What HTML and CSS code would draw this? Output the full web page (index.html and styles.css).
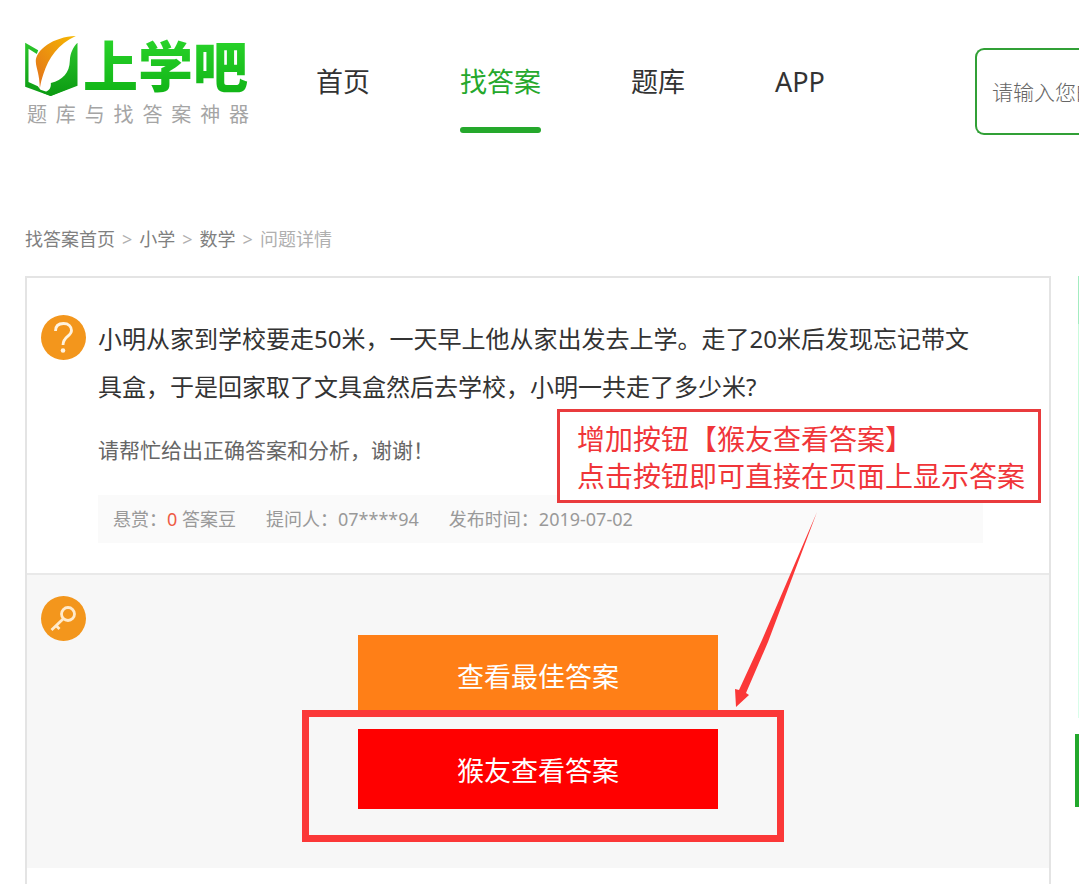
FILE: index.html
```html
<!DOCTYPE html>
<html lang="zh-CN">
<head>
<meta charset="utf-8">
<title>问题详情 - 上学吧找答案</title>
<link rel="stylesheet" href="styles.css">
</head>
<body>
<header class="header">
  <a class="logo" href="#">
    <span class="logo-top">
      <svg class="logo-mark" viewBox="0 0 158 180" aria-hidden="true">
        <defs>
          <linearGradient id="leaf" x1="0" y1="0" x2="0" y2="1"><stop offset="0" stop-color="#2bc52b"/><stop offset="1" stop-color="#0b9a12"/></linearGradient>
          <linearGradient id="quill" x1="1" y1="0" x2="0" y2="1"><stop offset="0" stop-color="#f6b800"/><stop offset="1" stop-color="#e2701c"/></linearGradient>
        </defs>
        <path fill="url(#leaf)" d="M0 20 39 43 35 54 10 38V138L38 151 46 161 76 171 158 146 76 180 0 152Z"/>
        <path fill="url(#leaf)" d="M157 20V149L77 180 54 171C72 165 78 157 77 141 113 132 133 110 134 74 135 49 145 32 157 20Z"/>
        <path fill="url(#quill)" d="M152 0C85 2 30 42 32 78 33 98 43 112 44 157 47 140 49 130 55 113 70 66 99 24 152 0Z"/>
      </svg>
      <span class="logo-name">上学吧</span>
    </span>
    <span class="logo-slogan">题库与找答案神器</span>
  </a>
  <nav class="nav">
    <a href="#">首页</a>
    <a class="active" href="#">找答案</a>
    <a href="#">题库</a>
    <a href="#">APP</a>
  </nav>
  <input class="search" type="text" aria-label="搜索" placeholder="请输入您的问题">
</header>

<nav class="crumbs" aria-label="面包屑">
  <a href="#">找答案首页</a><span>&gt;</span><a href="#">小学</a><span>&gt;</span><a href="#">数学</a><span>&gt;</span><span>问题详情</span>
</nav>

<div class="layout">
  <main class="card">
    <section class="question">
      <svg class="badge" viewBox="0 0 45 45" aria-hidden="true">
        <circle cx="22.5" cy="22.5" r="22.5" fill="#f3961c"/>
        <path d="M14.500 16C14.500 11 17.500 8.500 22.500 8.500S30.500 11.500 30.500 15.500C30.500 21.500 22 21 22 30" fill="none" stroke="#fff3df" stroke-width="2.800"/>
        <circle cx="22" cy="35.500" r="2.300" fill="#fff3df"/>
      </svg>
      <div class="question-body">
        <h1 class="question-title">小明从家到学校要走50米，一天早上他从家出发去上学。走了20米后发现忘记带文具盒，于是回家取了文具盒然后去学校，小明一共走了多少米?</h1>
        <p class="question-note">请帮忙给出正确答案和分析，谢谢！</p>
        <div class="meta">
          <span>悬赏：<b>0</b> 答案豆</span>
          <span>提问人：07****94</span>
          <span>发布时间：2019-07-02</span>
        </div>
      </div>
    </section>
    <section class="answer">
      <svg class="badge" viewBox="0 0 45 45" aria-hidden="true">
        <circle cx="22.5" cy="22.5" r="22.5" fill="#f3961c"/>
        <g fill="none" stroke="#ffeacb" stroke-width="2.800">
          <circle cx="27" cy="18" r="6.500"/>
          <path d="M22.300 22.700 10.500 34M15 29.500 18.500 33"/>
        </g>
      </svg>
      <div class="actions">
        <button class="btn btn-best" type="button">查看最佳答案</button>
        <div class="marked">
          <button class="btn btn-friend" type="button">猴友查看答案</button>
          <div class="mark"></div>
        </div>
        <svg class="arrow" viewBox="0 0 84 196" aria-hidden="true">
          <path fill="#fb3838" d="M83 0 34 130 12 181 15 183 2 195 1 177 5 178 28 128Z"/>
        </svg>
      </div>
    </section>
    <div class="callout">增加按钮【猴友查看答案】<br>点击按钮即可直接在页面上显示答案</div>
  </main>
  <aside class="side">
    <div class="side-banner"></div>
    <div class="side-tab"></div>
  </aside>
</div>
</body>
</html>
```
FILE: styles.css
```css
* { box-sizing: border-box; }

body {
  margin: 0;
  min-height: 100vh;
  display: flex;
  flex-direction: column;
  overflow: hidden;
  background: #fff;
  color: #333;
  font-family: "Noto Sans", "Noto Sans CJK SC", sans-serif;
}

a { color: inherit; text-decoration: none; }

.header {
  display: flex;
  align-items: flex-start;
  padding: 36px 0 0 25px;
}

.logo { width: 224px; flex: none; }
.logo-top { display: flex; align-items: center; gap: 5px; height: 60px; }
.logo-mark { width: 53px; height: 60px; }
.logo-name {
  font-size: 55px;
  font-weight: 900;
  line-height: 64px;
  white-space: nowrap;
  color: transparent;
  background: linear-gradient(#2bd52b, #0fb215);
  background-clip: text;
}
.logo-slogan {
  display: block;
  margin-top: 4px;
  padding-left: 2px;
  font-size: 20px;
  line-height: 30px;
  color: #a5a5a5;
  text-align-last: justify;
}

.nav { display: flex; gap: 90px; margin: 24px 0 0 67px; flex: none; }
.nav a {
  height: 73px;
  font-size: 27px;
  line-height: 44px;
}
.nav .active { color: #25a82c; }
.nav .active::after {
  content: "";
  display: block;
  height: 6px;
  margin-top: 23px;
  border-radius: 3px;
  background: #25a82c;
}

.search {
  flex: 1 0 0;
  min-width: 0;
  height: 87px;
  margin: 12px 0 0 150px;
  padding: 0 0 0 15px;
  border: 2px solid #31a036;
  border-right: 0;
  border-radius: 9px 0 0 9px;
  font: inherit;
  font-size: 21px;
  font-weight: 300;
  background: #fff;
}
.search::placeholder { color: #666; }

.crumbs {
  display: flex;
  gap: 7px;
  margin: 91px 0 24px;
  padding-left: 25px;
  font-size: 18px;
  line-height: 26px;
  color: #b0b0b0;
}
.crumbs a { color: #808080; }

.layout {
  flex: 1;
  display: grid;
  grid-template-columns: 1fr 4px;
  gap: 24px;
  padding-left: 25px;
}

.card {
  position: relative;
  border: 2px solid #e4e4e4;
  border-bottom: 0;
}

.badge { width: 45px; height: 45px; flex: none; }

.question {
  display: flex;
  gap: 12px;
  padding: 37px 66px 30px 14px;
}
.question-body { flex: 1; }
.question-title {
  margin: 0;
  font-size: 24px;
  line-height: 48px;
  font-weight: 400;
}
.question-note {
  margin: 24px 0 30px;
  font-size: 21px;
  line-height: 30px;
  color: #666;
}
.meta {
  display: flex;
  gap: 30px;
  padding: 0 15px;
  font-size: 18px;
  line-height: 48px;
  color: #999;
  background: #fafafa;
}
.meta b { font-weight: 400; color: #ee5b45; }

.answer {
  display: grid;
  grid-template-columns: 45px 1fr 45px;
  padding: 21px 14px 59px;
  border-top: 2px solid #e9e9e9;
  background: #f7f7f7;
}
.actions {
  position: relative;
  display: grid;
  gap: 14px;
  width: 360px;
  margin: 39px auto 0;
}
.btn {
  display: block;
  width: 100%;
  height: 80px;
  padding: 0;
  border: 0;
  font: inherit;
  font-size: 27px;
  color: #fff;
}
.btn-best { background: #ff7f17; }
.btn-friend { background: #f00; }

/* Annotations drawn over the page */
.marked { position: relative; }
.mark {
  position: absolute;
  inset: -19px -66px -33px -56px;
  border: 7px solid #fb3838;
  pointer-events: none;
}
.arrow {
  position: absolute;
  left: 376px;
  top: -123px;
  width: 84px;
  height: 196px;
}
.callout {
  position: absolute;
  top: 131px;
  right: 8px;
  padding: 9px 13px 5px 17px;
  border: 3px solid #e93b3d;
  font-size: 28px;
  line-height: 37px;
  white-space: nowrap;
  color: #f03539;
  background: #fff;
}

.side { display: flex; flex-direction: column; align-items: flex-end; gap: 16px; }
.side-banner {
  width: 1px;
  height: 442px;
  background: linear-gradient(#a3ecc0 0 48px, #c9fbdc 48px 220px, #d9fdea);
}
.side-tab { width: 4px; height: 73px; background: #22a82c; }
```
